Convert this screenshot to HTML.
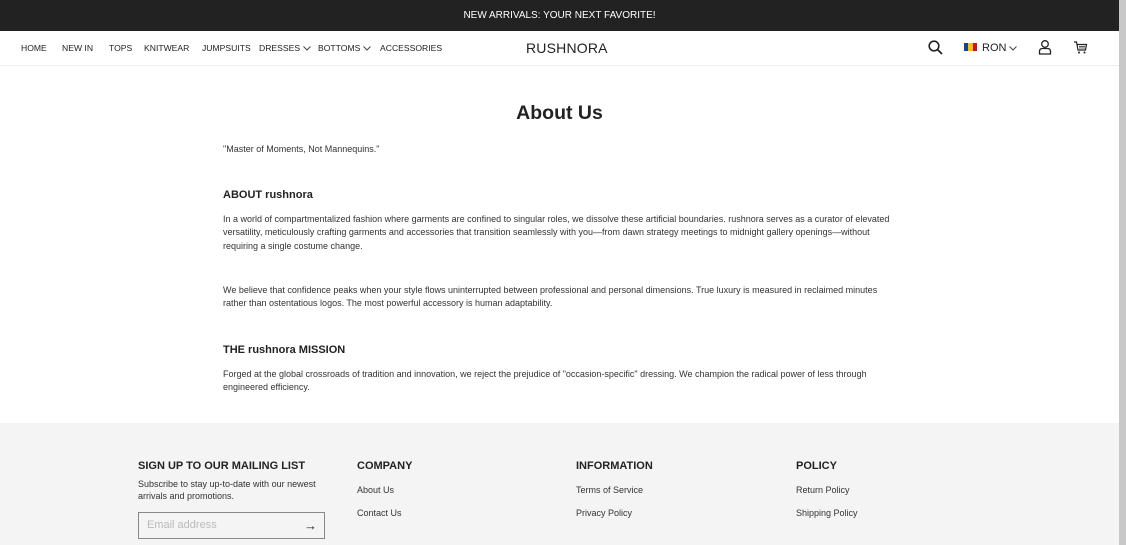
<!DOCTYPE html>
<html><head><style>
*{margin:0;padding:0;box-sizing:border-box}
body{width:1126px;height:545px;overflow:hidden;background:#fff;font-family:"Liberation Sans",sans-serif;color:#222;position:relative}
.scroll{position:absolute;right:0;top:0;width:7px;height:545px;background:#c8c8c8}
.top{position:absolute;left:0;top:0;width:1119px;height:31px;background:#222;color:#fff;font-size:10px;text-align:center;line-height:31px}
.hdr{position:absolute;left:0;top:31px;width:1119px;height:35px;border-bottom:1px solid #eee;background:#fff}
.n{position:absolute;top:0;line-height:34px;font-size:8.6px;color:#222;white-space:nowrap}
.logo{position:absolute;left:526px;top:0;line-height:34px;font-size:14px;letter-spacing:.2px}
h1{position:absolute;left:0;width:1119px;text-align:center;top:102px;font-size:19.5px;font-weight:bold;color:#222}
.p{position:absolute;left:223px;width:668px;font-size:9px;line-height:13.3px;color:#333}
h3{position:absolute;left:223px;font-size:11px;font-weight:bold}
.foot{position:absolute;left:0;top:423px;width:1119px;height:122px;background:#f4f4f4}
.fh{position:absolute;font-size:11px;font-weight:bold;top:37px}
.fl{position:absolute;font-size:9px;color:#333}
.inp{position:absolute;left:138px;top:89px;width:187px;height:27px;border:1px solid #888;font-size:11px;color:#bbb;line-height:25px;padding-left:8px}
.ch{display:inline-block;vertical-align:middle;margin-left:3px}
</style></head><body>
<div class="top">NEW ARRIVALS: YOUR NEXT FAVORITE!</div>
<div class="hdr">
<div class="n" style="left:21px">HOME</div>
<div class="n" style="left:62px">NEW IN</div>
<div class="n" style="left:109px">TOPS</div>
<div class="n" style="left:144px">KNITWEAR</div>
<div class="n" style="left:202px">JUMPSUITS</div>
<div class="n" style="left:259px">DRESSES<svg class="ch" width="8" height="5" viewBox="0 0 8 5"><path d="M.5 .5 4 4 7.5 .5" fill="none" stroke="#444"/></svg></div>
<div class="n" style="left:318px">BOTTOMS<svg class="ch" width="8" height="5" viewBox="0 0 8 5"><path d="M.5 .5 4 4 7.5 .5" fill="none" stroke="#444"/></svg></div>
<div class="n" style="left:380px">ACCESSORIES</div>
<div class="logo">RUSHNORA</div>
<svg style="position:absolute;left:928px;top:9px" width="15" height="15" viewBox="0 0 15 15"><circle cx="6" cy="6" r="4.8" fill="none" stroke="#222" stroke-width="1.6"/><path d="M9.5 9.5 14 14" stroke="#222" stroke-width="1.8"/></svg>
<div style="position:absolute;left:964px;top:12px;width:13px;height:8px;display:flex"><i style="flex:1;background:#1a3c9c"></i><i style="flex:1;background:#f5c400"></i><i style="flex:1;background:#d0102a"></i></div>
<div class="n" style="left:982px;font-size:11px">RON<svg class="ch" width="8" height="5" viewBox="0 0 8 5"><path d="M.5 .5 4 4 7.5 .5" fill="none" stroke="#444"/></svg></div>
<svg style="position:absolute;left:1038px;top:8px" width="14" height="16" viewBox="0 0 14 16"><circle cx="7" cy="5" r="3.3" fill="none" stroke="#222" stroke-width="1.3"/><path d="M1.5 15 V12.5 Q1.5 9.5 4.5 9.5 H9.5 Q12.5 9.5 12.5 12.5 V15 Z" fill="none" stroke="#222" stroke-width="1.3"/></svg>
<svg style="position:absolute;left:1073px;top:9px" width="15" height="15" viewBox="0 0 15 15"><path d="M1 2 H3.5 L5 10 H12.5 L13.5 4.5 H4" fill="none" stroke="#222" stroke-width="1.2"/><path d="M6 6.5 H12 M6 8 H12" stroke="#222" stroke-width=".8"/><circle cx="6" cy="12.5" r="1" fill="#222"/><circle cx="11.5" cy="12.5" r="1" fill="#222"/></svg>
</div>
<h1>About Us</h1>
<div class="p" style="top:143px">"Master of Moments, Not Mannequins."</div>
<h3 style="top:189px">ABOUT rushnora</h3>
<div class="p" style="top:213px">In a world of compartmentalized fashion where garments are confined to singular roles, we dissolve these artificial boundaries. rushnora serves as a curator of elevated versatility, meticulously crafting garments and accessories that transition seamlessly with you—from dawn strategy meetings to midnight gallery openings—without requiring a single costume change.</div>
<div class="p" style="top:284px">We believe that confidence peaks when your style flows uninterrupted between professional and personal dimensions. True luxury is measured in reclaimed minutes rather than ostentatious logos. The most powerful accessory is human adaptability.</div>
<h3 style="top:344px">THE rushnora MISSION</h3>
<div class="p" style="top:368px">Forged at the global crossroads of tradition and innovation, we reject the prejudice of "occasion-specific" dressing. We champion the radical power of less through engineered efficiency.</div>
<div class="foot">
<div class="fh" style="left:138px">SIGN UP TO OUR MAILING LIST</div>
<div class="fl" style="left:138px;top:56px;line-height:11.5px">Subscribe to stay up-to-date with our newest<br>arrivals and promotions.</div>
<div class="inp">Email address<span style="position:absolute;right:7px;color:#222;font-size:13px">→</span></div>
<div class="fh" style="left:357px">COMPANY</div>
<div class="fl" style="left:357px;top:62px">About Us</div>
<div class="fl" style="left:357px;top:85px">Contact Us</div>
<div class="fh" style="left:576px">INFORMATION</div>
<div class="fl" style="left:576px;top:62px">Terms of Service</div>
<div class="fl" style="left:576px;top:85px">Privacy Policy</div>
<div class="fh" style="left:796px">POLICY</div>
<div class="fl" style="left:796px;top:62px">Return Policy</div>
<div class="fl" style="left:796px;top:85px">Shipping Policy</div>
</div>
<div class="scroll"></div>
</body></html>
